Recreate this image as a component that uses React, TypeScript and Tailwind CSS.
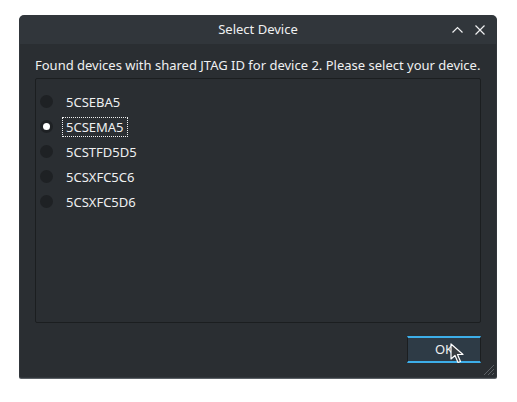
import React from 'react';

const devices = ['5CSEBA5', '5CSEMA5', '5CSTFD5D5', '5CSXFC5C6', '5CSXFC5D6'];

export default function App() {
  const selected = '5CSEMA5';
  return (
    <div className="relative w-[517px] h-[402px] bg-white" style={{ fontFamily: '"Noto Sans", sans-serif' }}>
      <div className="absolute left-[19px] top-[15px] w-[478px] h-[363px] rounded-t-[5px] rounded-b-[2px] bg-[#31363b] flex flex-col shadow-[0_1px_0_#5c6166]">
        {/* title bar */}
        <div className="relative h-[29px] flex items-center justify-center text-[13px] text-[#eff0f1]">
          Select Device
          <div className="absolute right-[12px] top-0 h-full flex items-center gap-[12px]">
            <svg width="11" height="7" viewBox="0 0 11 7">
              <path d="M0.5 6.5 L5.5 1.5 L10.5 6.5" stroke="#eff0f1" strokeWidth="1.2" fill="none" />
            </svg>
            <svg width="10" height="10" viewBox="0 0 10 10">
              <path d="M0.5 0.5 L9.5 9.5 M9.5 0.5 L0.5 9.5" stroke="#eff0f1" strokeWidth="1.2" fill="none" />
            </svg>
          </div>
        </div>
        {/* body */}
        <div className="flex-1 mx-[1px] mb-[1px] bg-[#2a2e32] flex flex-col px-[15px] pt-[12px] pb-[14px]">
          <p className="text-[13px] leading-[18px] text-[#eff0f1]">
            Found devices with shared JTAG ID for device 2. Please select your device.
          </p>
          <div className="mt-[4px] h-[245px] border border-[#1b1e20] rounded-[2px] bg-[#2a2e32] pt-[10px] pl-[4px]">
            <div className="flex flex-col">
              {devices.map((d) => (
                <div key={d} className="h-[25px] flex items-center">
                  <span className="w-[13px] h-[13px] rounded-full bg-[#1e2124] flex items-center justify-center">
                    {d === selected && <span className="w-[7px] h-[7px] rounded-full bg-white" />}
                  </span>
                  <span
                    className={`ml-[9px] px-[3px] text-[13px] leading-[18px] text-[#eff0f1] ${
                      d === selected ? 'border border-dotted border-[#eff0f1]' : 'border border-transparent'
                    }`}
                  >
                    {d}
                  </span>
                </div>
              ))}
            </div>
          </div>
          <div className="mt-auto flex justify-end">
            <button className="w-[74px] h-[27px] bg-[#2e3b46] border-y-2 border-[#3daee9] border-x border-x-[#1b1e20] text-[13px] text-[#eff0f1]">
              OK
            </button>
          </div>
        </div>
        {/* size grip */}
        <svg className="absolute right-[2px] bottom-[2px]" width="14" height="14" viewBox="0 0 14 14">
          <path d="M13 3 L3 13 M13 7 L7 13 M13 11 L11 13" stroke="#5c6166" strokeWidth="1" />
        </svg>
      </div>
      {/* mouse cursor */}
      <svg className="absolute left-[450px] top-[343px]" width="16" height="22" viewBox="0 0 16 22">
        <path d="M1 1 L1 16 L5 12.5 L8 19.5 L10.5 18.5 L7.5 11.5 L13 11.5 Z" fill="#3b3e41" stroke="#ffffff" strokeWidth="1.2" strokeLinejoin="round" />
      </svg>
    </div>
  );
}
